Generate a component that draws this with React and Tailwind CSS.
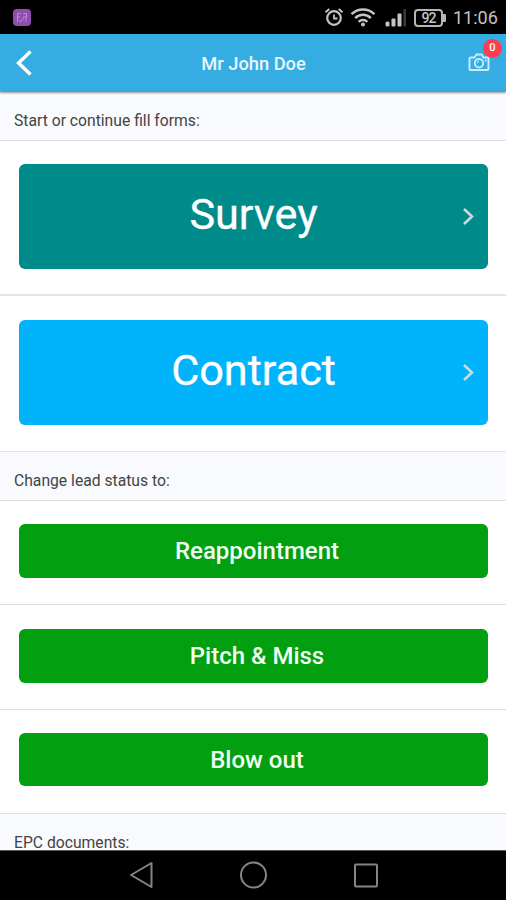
import React from 'react';

const forms = [
  { label: 'Survey', color: 'bg-[#008b8b]', row: 'h-[155px] pt-[23px] border-b-2' },
  { label: 'Contract', color: 'bg-[#00b3fb]', row: 'h-[156px] pt-6 border-b' },
];

const statuses = [
  { label: 'Reappointment', row: 'h-[104px] pt-[23px]', button: 'h-[54px]' },
  { label: 'Pitch & Miss', row: 'h-[105px] pt-6', button: 'h-[54px]' },
  { label: 'Blow out', row: 'h-[104px] pt-[23px]', button: 'h-[53px]' },
];

const StatusBar = () => (
  <div className="h-[34px] shrink-0 bg-black flex items-center pl-[13px] pr-2 text-[#c4c4c4]">
    <svg width="18" height="17" viewBox="0 0 18 17" fill="none">
      <rect width="18" height="17" rx="4" fill="#8e4ead" />
      <g stroke="#b98fd0" strokeWidth="1">
        <path d="M4.500 13V4.500h3M4.500 9 7 7M10 4.500h3.500V8M10 8h3v5M7 13l4-4M7 11v2" />
      </g>
    </svg>

    <svg className="ml-auto" width="20" height="20" viewBox="0 0 20 20" fill="none" stroke="currentColor">
      <circle cx="10" cy="11" r="6.800" strokeWidth="2.200" />
      <path d="M10 7.500v4h3.500" strokeWidth="1.800" />
      <path d="M1.500 5.200 5.300 2M18.500 5.200 14.700 2" strokeWidth="2" />
    </svg>

    <svg className="ml-[6px]" width="26" height="20" viewBox="0 0 26 20" fill="none" stroke="currentColor" strokeWidth="2.500">
      <path d="M1.500 7.200a16.300 16.300 0 0 1 23 0" />
      <path d="M5.200 11.100a11 11 0 0 1 15.600 0" />
      <path d="M8.700 14.800a6.100 6.100 0 0 1 8.600 0" />
      <circle cx="13" cy="17.500" r="2" fill="currentColor" stroke="none" />
    </svg>

    <svg className="ml-[9px]" width="22" height="20" viewBox="0 0 22 20" fill="currentColor">
      <rect x="0.500" y="14.500" width="4" height="5" rx="1.500" />
      <rect x="6.500" y="11.500" width="4" height="8" rx="1" />
      <rect x="12.500" y="6.500" width="4" height="13" rx="1" />
      <rect x="18.500" y="2" width="2.500" height="17.500" rx="0.500" fill="#393939" />
    </svg>

    <div className="ml-[7px] mt-[2px] flex items-center">
      <div className="w-[29px] h-[18px] rounded-[4px] border-2 border-[#b5b5b5] flex items-center justify-center text-[14px] leading-none font-medium tracking-[-1px]">
        92
      </div>
      <div className="w-[3px] h-[8px] rounded-r-[1px] bg-[#b5b5b5]" />
    </div>

    <span className="ml-[7px] mt-[2px] w-[45px] text-[18px] leading-none whitespace-nowrap">11:06</span>
  </div>
);

const Header = () => (
  <div className="relative z-10 h-[58px] shrink-0 bg-[#35ade3] flex items-center justify-between pl-[15px] pr-4 text-white shadow-[0_1px_2px_rgba(0,0,0,0.400)]">
    <svg width="20" height="28" viewBox="0 0 20 28" fill="none" stroke="currentColor" strokeWidth="3.400">
      <path d="M15.500 2.500 3.500 14 15.500 25.500" />
    </svg>
    <h1 className="pl-[4px] pt-px text-[18.300px] font-medium text-[#e9f8ff]">Mr John Doe</h1>
    <div className="relative">
      <svg width="22" height="20" viewBox="0 0 22 20" fill="none" stroke="#c9edff" strokeWidth="1.900">
        <path d="M2.500 4.500h4l2-3h5l2 3h4a1 1 0 0 1 1 1v10.500a1 1 0 0 1-1 1h-17a1 1 0 0 1-1-1V5.500a1 1 0 0 1 1-1Z" />
        <circle cx="11" cy="10.200" r="4.200" />
        <path d="M9.200 10.200A1.800 1.800 0 0 1 11 8.400" strokeWidth="1" />
        <path d="M17 7.500h1.500" />
      </svg>
      <span className="absolute left-[15px] top-[-14px] size-[19px] rounded-full bg-[#fb3f50] text-[11px] font-medium flex items-center justify-center">
        0
      </span>
    </div>
  </div>
);

const SectionTitle = ({ children, className }) => (
  <div className={`shrink-0 bg-[#f8fafd] border-[#dedede] pl-[14px] text-[15.700px] text-[#444] ${className}`}>
    {children}
  </div>
);

const FormButton = ({ label, color }) => (
  <button className={`relative w-full h-[105px] rounded-[6px] pb-[3px] pl-px text-[43.200px] leading-none text-white [-webkit-text-stroke:0.300px_white] ${color}`}>
    {label}
    <svg
      className="absolute right-[13px] top-[43px]"
      width="13"
      height="19"
      viewBox="0 0 13 19"
      fill="none"
      stroke="#c5dce2"
      strokeWidth="2.600"
    >
      <path d="m2 2 8 7.500L2 17" />
    </svg>
  </button>
);

const NavBar = () => (
  <div className="h-[50px] shrink-0 bg-black border-t border-[#555]">
    <svg width="506" height="49" viewBox="0 851 506 49" fill="none" stroke="#858585" strokeWidth="2" strokeLinejoin="round">
      <path d="M131 875 151.500 863v24Z" />
      <circle cx="253.500" cy="875" r="12.500" />
      <rect x="355" y="864.500" width="22" height="22" rx="1" />
    </svg>
  </div>
);

const App = () => {
  return (
    <div className="w-[506px] h-[900px] overflow-hidden flex flex-col bg-white font-[Roboto,sans-serif]">
      <StatusBar />
      <Header />

      <div className="flex-1 min-h-0 overflow-hidden flex flex-col">
        <SectionTitle className="h-[49px] pt-[19px] leading-5 border-b">Start or continue fill forms:</SectionTitle>

        {forms.map(({ label, color, row }) => (
          <div key={label} className={`shrink-0 px-[18.500px] border-[#e4e4e4] ${row}`}>
            <FormButton label={label} color={color} />
          </div>
        ))}

        <SectionTitle className="h-[49px] pt-[19px] leading-5 border-b">Change lead status to:</SectionTitle>

        {statuses.map(({ label, row, button }) => (
          <div key={label} className={`shrink-0 px-[18.500px] border-b border-[#dedede] ${row}`}>
            <button className={`w-full rounded-[6px] bg-[#029f10] pl-[8px] text-[24px] leading-none font-medium text-[#f0fff0] ${button}`}>
              {label}
            </button>
          </div>
        ))}

        <SectionTitle className="h-9 pt-[22px] leading-[14px]">EPC documents:</SectionTitle>
      </div>

      <NavBar />
    </div>
  );
};

export default App;
